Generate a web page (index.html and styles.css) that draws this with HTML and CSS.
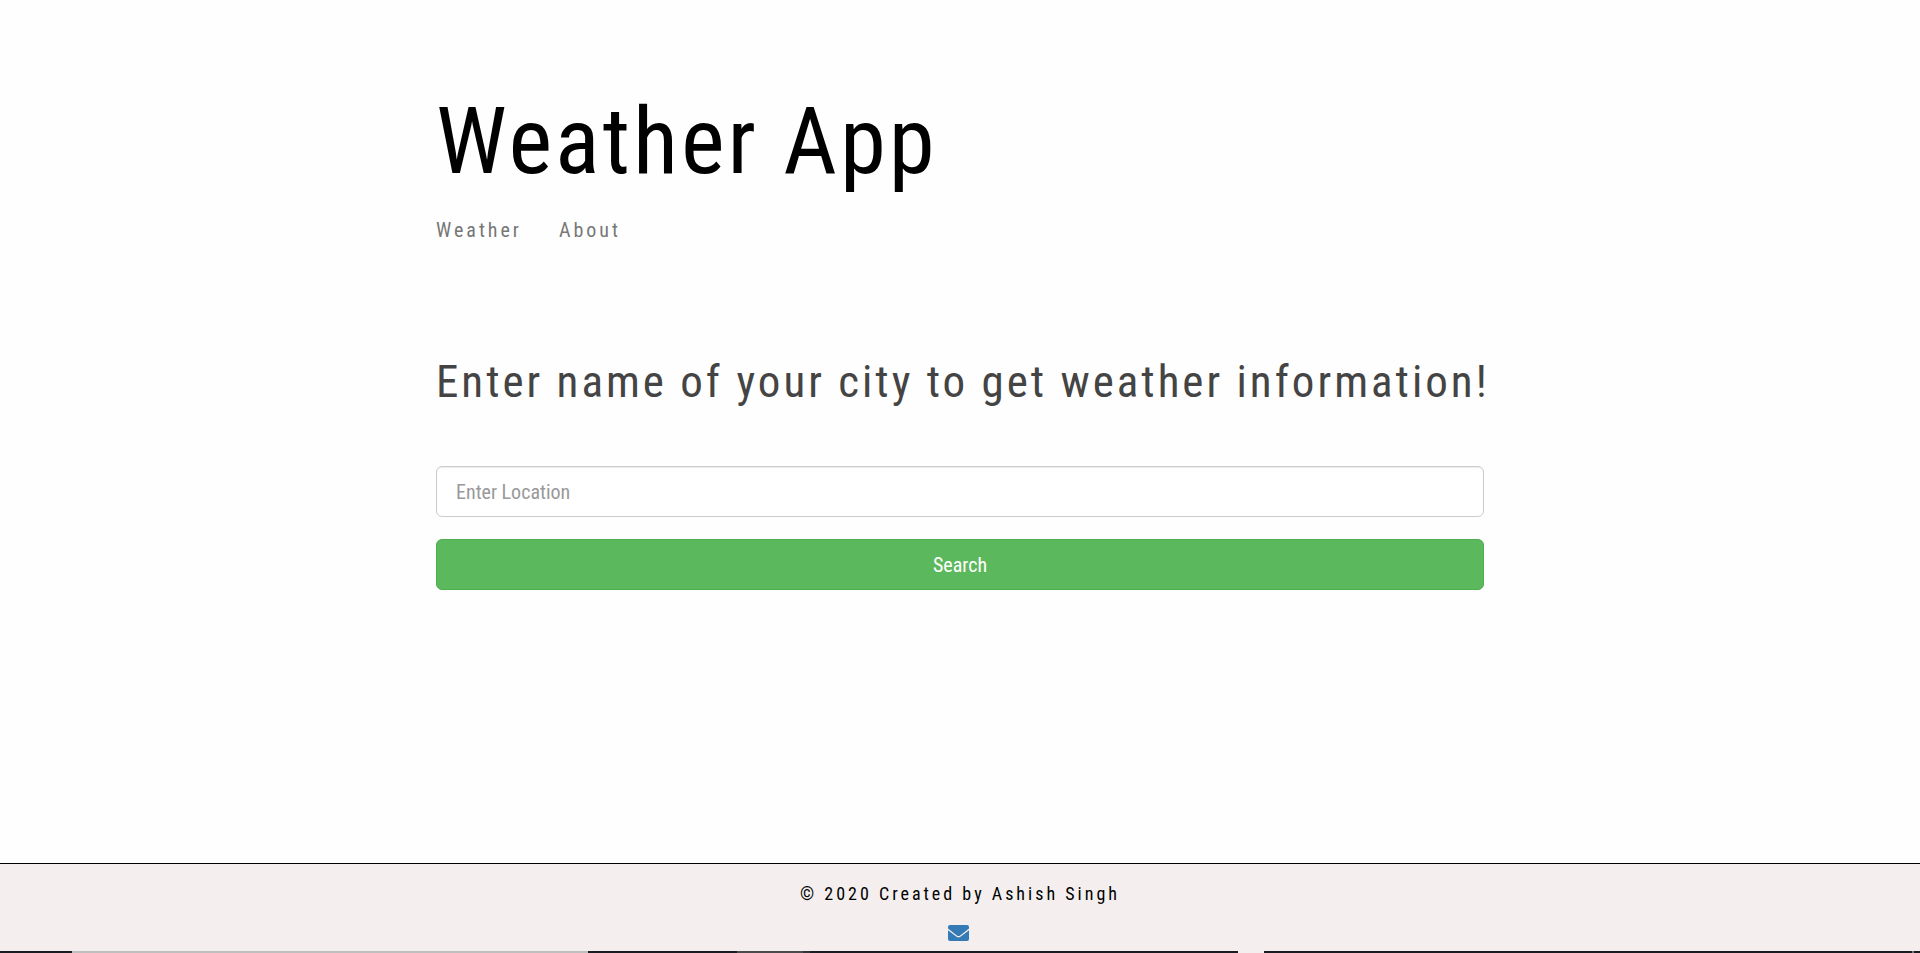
FILE: index.html
```html
<!DOCTYPE html>
<html lang="en">
<head>
<meta charset="utf-8">
<meta name="viewport" content="width=device-width, initial-scale=1">
<title>Weather App</title>
<link rel="stylesheet" href="styles.css">
</head>
<body>
<div class="page">
  <header class="site-header">
    <h1 class="site-title">Weather App</h1>
    <nav class="site-nav">
      <a class="nav-link" href="#weather">Weather</a>
      <a class="nav-link" href="#about">About</a>
    </nav>
  </header>
  <main class="search">
    <h2 class="search-title">Enter name of your city to get weather information!</h2>
    <form class="search-form">
      <input class="field" type="text" aria-label="Location" placeholder="Enter Location">
      <button class="button" type="submit">Search</button>
    </form>
  </main>
</div>
<footer class="site-footer">
  <p class="credit">© 2020 Created by Ashish Singh</p>
  <a class="mail" href="#mail" aria-label="Email">
    <svg class="mail-icon" viewBox="0 0 21 16" aria-hidden="true">
      <path d="M2 0h17a2 2 0 0 1 2 2v1.600L12.200 10.400q-1.700 1.300-3.400 0L0 3.600V2a2 2 0 0 1 2-2z"/>
      <path d="M0 5.200l8.200 6.300q2.300 1.700 4.600 0L21 5.200V14a2 2 0 0 1-2 2H2a2 2 0 0 1-2-2z"/>
    </svg>
  </a>
</footer>
<div class="edge"></div>
</body>
</html>
```
FILE: styles.css
```css
* {
  box-sizing: border-box;
}

body {
  display: flex;
  flex-direction: column;
  min-height: 100vh;
  margin: 0;
  background: #fefefe;
  color: #000;
  font-family: "Ubuntu Condensed", "Roboto Condensed", "Liberation Sans Narrow", "DejaVu Sans Condensed", sans-serif;
  letter-spacing: 3px;
}

.page {
  flex: 1;
  width: 100%;
  max-width: 1080px;
  margin: 0 auto;
  padding: 84px 16px 32px;
}

.site-title {
  margin: 0;
  font-size: 93px;
  font-weight: 400;
  line-height: 116px;
}

.site-nav {
  display: flex;
  gap: 37px;
  margin-top: 16px;
  font-size: 20px;
  line-height: 28px;
}

.nav-link {
  color: #777;
  text-decoration: none;
}

.search {
  margin-top: 108px;
}

.search-title {
  margin: 0;
  color: #444;
  font-size: 45px;
  font-weight: 400;
  line-height: 60px;
}

@media (min-width: 1100px) {
  .search-title {
    white-space: nowrap;
  }
}

.search-form {
  display: grid;
  gap: 22px;
  margin-top: 54px;
}

.field,
.button {
  width: 100%;
  height: 51px;
  padding: 0 19px;
  border: 1px solid #ccc;
  border-radius: 6px;
  font-family: inherit;
  font-size: 20px;
}

.field {
  background: #fff;
  box-shadow: inset 0 1px 1px rgba(0, 0, 0, 0.08);
  color: #555;
}

.field::placeholder {
  color: #999;
  opacity: 1;
}

.button {
  border-color: #4cae4c;
  background: #5cb85c;
  color: #fff;
}

.site-footer {
  display: flex;
  flex-direction: column;
  align-items: center;
  gap: 18px;
  padding: 17px 16px 10px;
  border-top: 1px solid #000;
  background: #f4efee;
}

.credit {
  margin: 0;
  font-size: 18px;
  line-height: 26px;
}

.mail {
  display: flex;
  padding-right: 3px;
  color: #337ab7;
}

.mail-icon {
  width: 21px;
  height: 16px;
  fill: currentColor;
}

.edge {
  height: 2px;
  background: linear-gradient(
    to right,
    #191c21 3.75%,
    #c0bfbf 3.75% 30.63%,
    #191c21 30.63% 38.39%,
    #4b4b4d 38.39% 41.82%,
    #333538 41.82% 42.19%,
    #191c21 42.19% 64.48%,
    #f4efee 64.48% 65.83%,
    #191c21 65.83% 99.6%,
    #777 99.6% 99.7%,
    #191c21 99.7%
  );
}
```
